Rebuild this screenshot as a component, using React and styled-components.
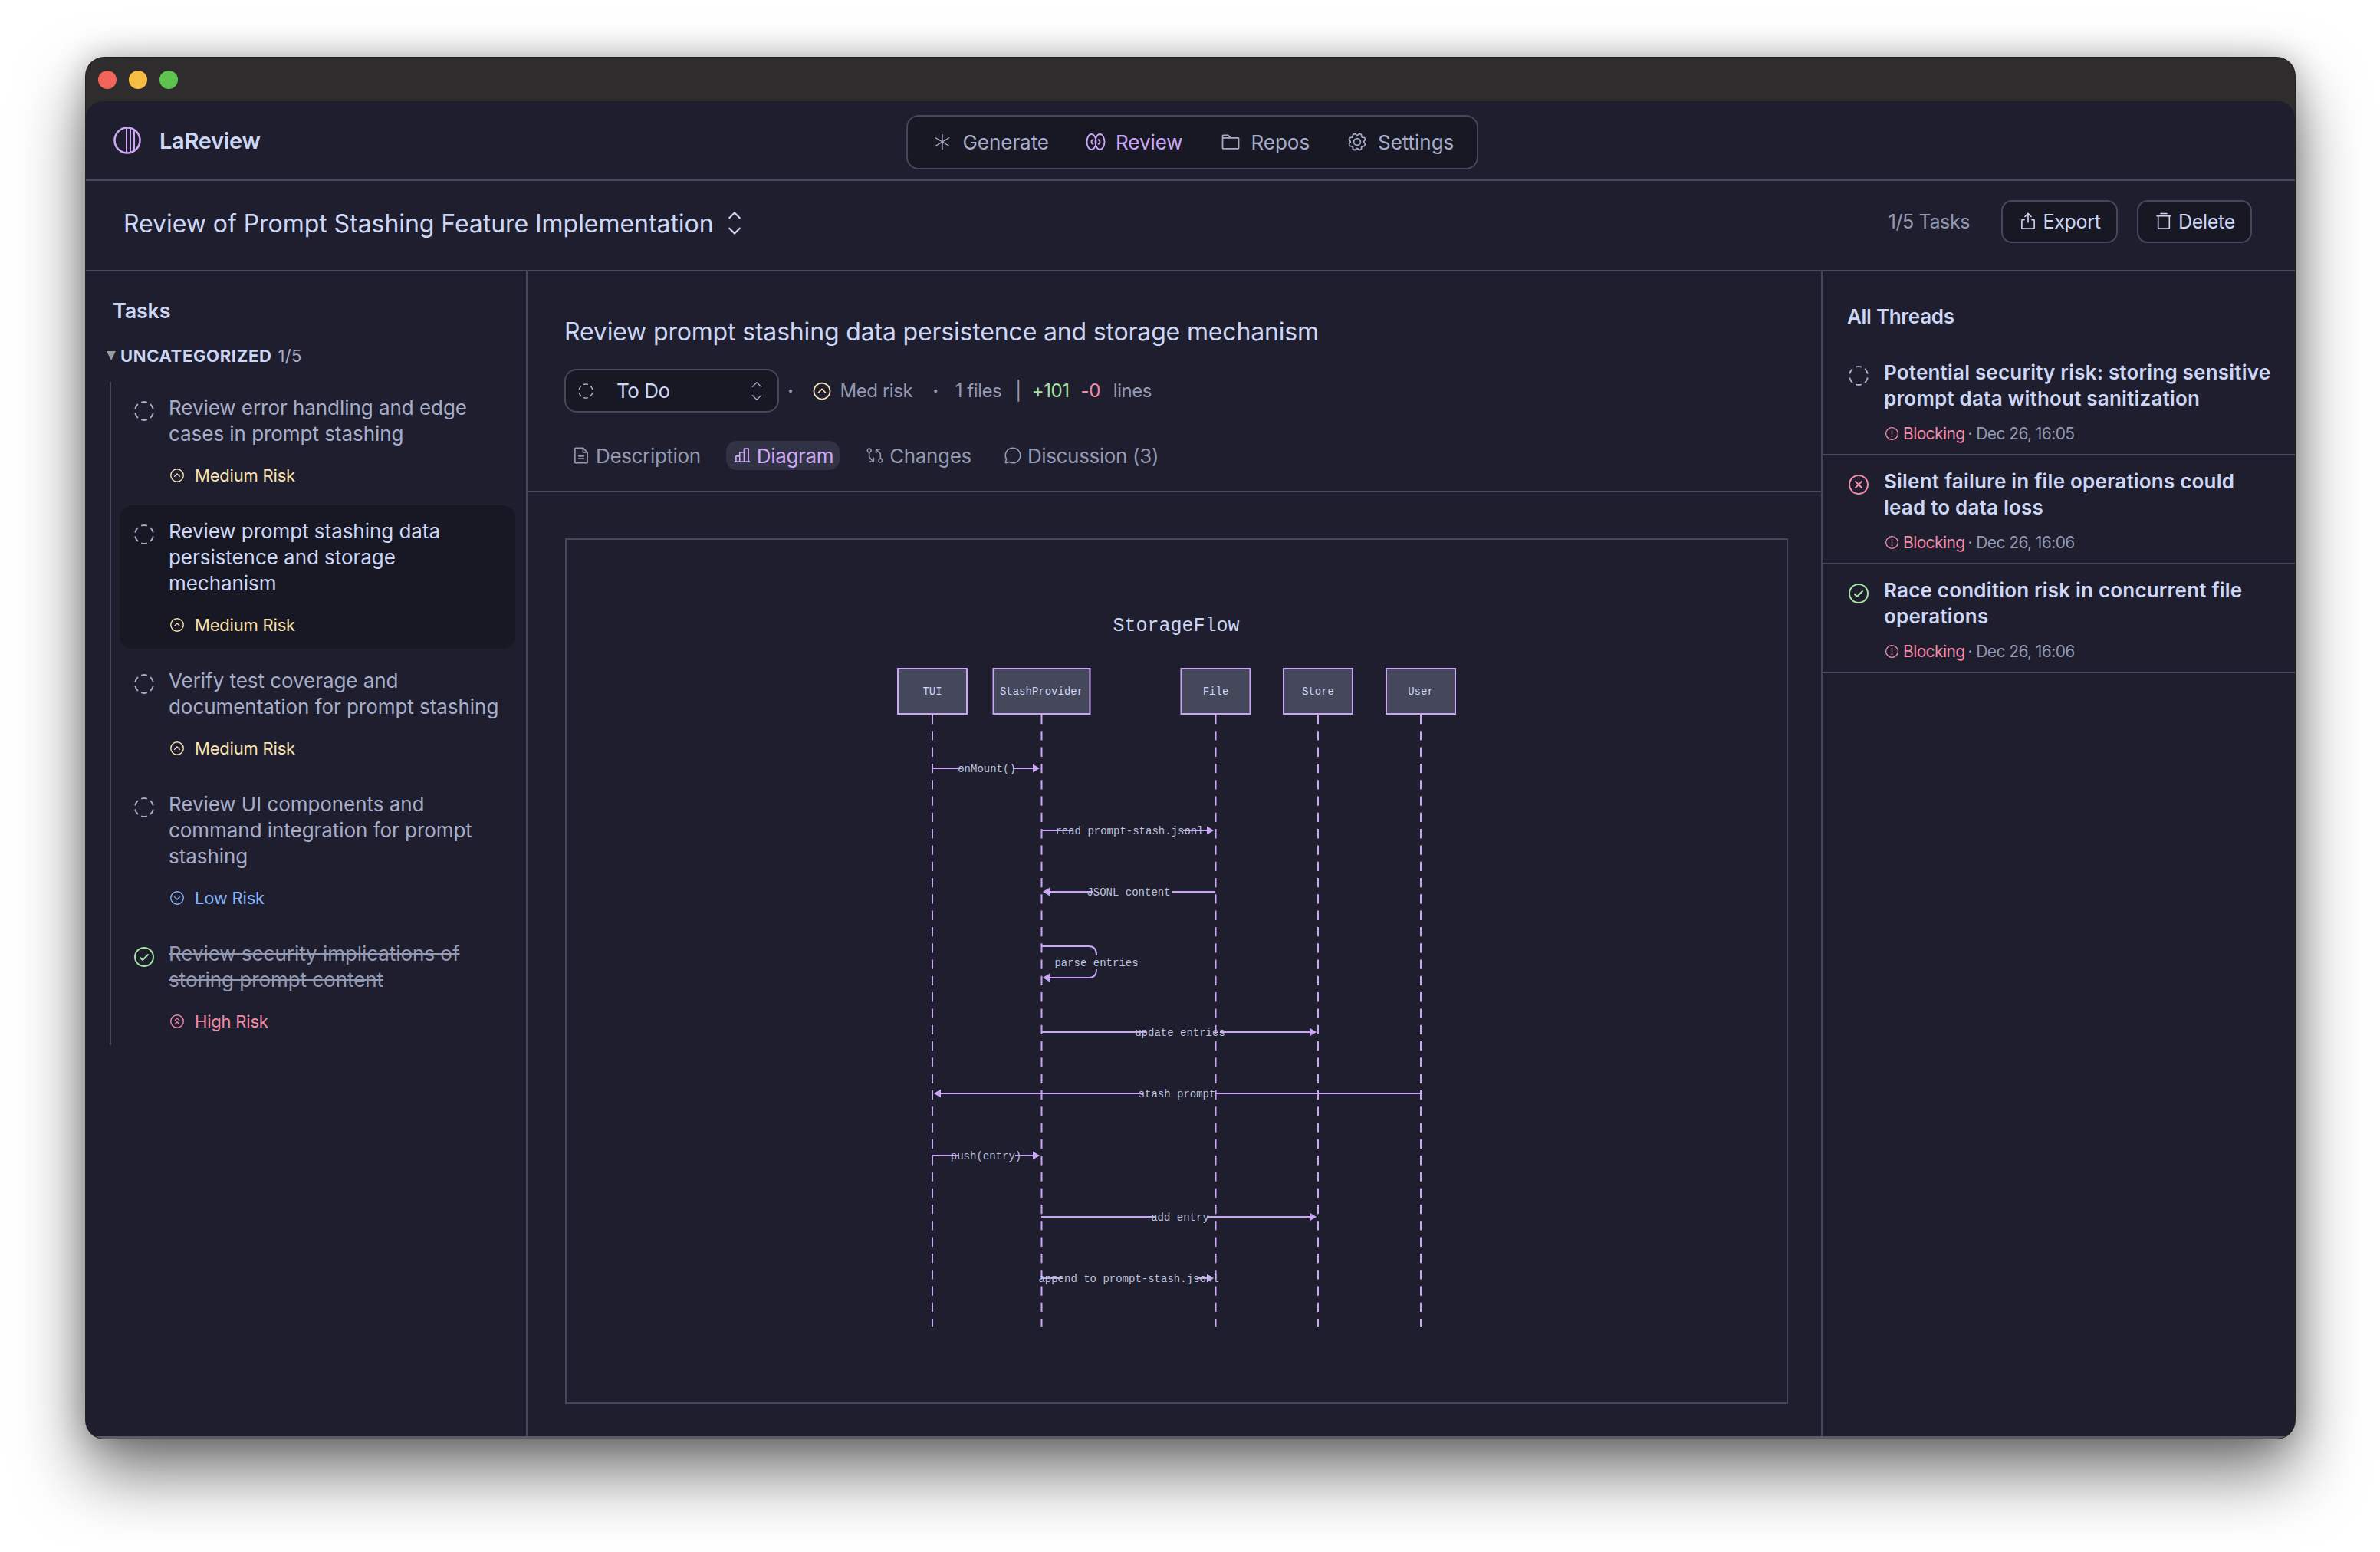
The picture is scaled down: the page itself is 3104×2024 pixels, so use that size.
import React from "react";
import styled, { createGlobalStyle } from "styled-components";
import {
  PiAsteriskLight,
  PiFolder,
  PiGear,
  PiCaretUpDown,
  PiCaretUpDownLight,
  PiExport,
  PiTrashSimple,
  PiCircleDashed,
  PiCheckCircle,
  PiXCircle,
  PiWarningCircle,
  PiCaretCircleUp,
  PiCaretCircleDown,
  PiCaretCircleDoubleUp,
  PiFileText,
  PiChartBar,
  PiGitDiff,
  PiChatCircle,
} from "react-icons/pi";

const base = "#1e1e2e";
const mantle = "#181825";
const line = "#45475a";
const text = "#cdd6f4";
const subtext = "#a6adc8";
const dim = "#9399b2";
const mauve = "#cba6f7";
const green = "#a6e3a1";
const red = "#f38ba8";
const yellow = "#f9e2af";
const blue = "#89b4fa";

const tasks = [
  { title: "Review error handling and edge cases in prompt stashing", risk: "Medium Risk", level: "med" },
  { title: "Review prompt stashing data persistence and storage mechanism", risk: "Medium Risk", level: "med", active: true },
  { title: "Verify test coverage and documentation for prompt stashing", risk: "Medium Risk", level: "med" },
  { title: "Review UI components and command integration for prompt stashing", risk: "Low Risk", level: "low" },
  { title: "Review security implications of storing prompt content", risk: "High Risk", level: "high", done: true },
];

const threads = [
  { title: "Potential security risk: storing sensitive prompt data without sanitization", time: "Dec 26, 16:05", state: "todo" },
  { title: "Silent failure in file operations could lead to data loss", time: "Dec 26, 16:06", state: "wontfix" },
  { title: "Race condition risk in concurrent file operations", time: "Dec 26, 16:06", state: "done" },
];

const riskColors = { med: yellow, low: blue, high: red };
const riskIcons = { med: PiCaretCircleUp, low: PiCaretCircleDown, high: PiCaretCircleDoubleUp };

const actors = [
  { name: "TUI", x: 1216, w: 90 },
  { name: "StashProvider", x: 1358.5, w: 126 },
  { name: "File", x: 1585.5, w: 90 },
  { name: "Store", x: 1719, w: 90 },
  { name: "User", x: 1853, w: 90 },
];

// from, to, y, label, label centre, and the gap the label cuts out of the line
const messages = [
  { from: 1216, to: 1358, y: 1002, label: "onMount()", cx: 1287, gap: [1255, 1321] },
  { from: 1358, to: 1585, y: 1083, label: "read prompt-stash.jsonl", cx: 1473, gap: [1400, 1543] },
  { from: 1585, to: 1358, y: 1163, label: "JSONL content", cx: 1472, gap: [1426, 1528] },
  { from: 1358, to: 1719, y: 1346, label: "update entries", cx: 1539, gap: [1495, 1591] },
  { from: 1853, to: 1216, y: 1426, label: "stash prompt", cx: 1535, gap: [1492, 1584] },
  { from: 1216, to: 1358, y: 1507, label: "push(entry)", cx: 1286, gap: [1250, 1324] },
  { from: 1358, to: 1719, y: 1587, label: "add entry", cx: 1539, gap: [1507, 1574] },
  { from: 1358, to: 1585, y: 1667, label: "append to prompt-stash.jsonl", cx: 1472, gap: [1385, 1561] },
];

// svg origin sits at the inside corner of the diagram frame
const OX = 739;
const OY = 704;

function Arrow({ x, y, dir }) {
  const tip = x - dir * 2;
  const back = tip - dir * 9;
  return <polygon points={`${tip - OX},${y - OY} ${back - OX},${y - 5.5 - OY} ${back - OX},${y + 5.5 - OY}`} fill={mauve} />;
}

function SequenceDiagram() {
  return (
    <svg width="1591" height="1125" viewBox="0 0 1591 1125" style={{ display: "block" }}>
      <SvgTitle x={1534 - OX} y={823 - OY} textAnchor="middle">StorageFlow</SvgTitle>
      {actors.map((a) => (
        <g key={a.name}>
          <line x1={a.x - OX} x2={a.x - OX} y1={932 - OY} y2={1730 - OY} stroke={mauve} strokeWidth="2" strokeDasharray="12.3 9" />
          <rect x={a.x - a.w / 2 - OX} y={872 - OY} width={a.w} height={59} fill={line} stroke={mauve} strokeWidth="2" />
          <SvgLabel x={a.x - OX} y={906 - OY} textAnchor="middle">{a.name}</SvgLabel>
        </g>
      ))}
      {messages.map((m) => {
        const dir = m.to > m.from ? 1 : -1;
        const [g1, g2] = m.gap;
        const nearEnd = dir > 0 ? g1 : g2;
        const farStart = dir > 0 ? g2 : g1;
        return (
          <g key={m.label}>
            <line x1={m.from - OX} x2={nearEnd - OX} y1={m.y - OY} y2={m.y - OY} stroke={mauve} strokeWidth="2" />
            <line x1={farStart - OX} x2={m.to - dir * 4 - OX} y1={m.y - OY} y2={m.y - OY} stroke={mauve} strokeWidth="2" />
            <Arrow x={m.to} y={m.y} dir={dir} />
            <SvgMessage x={m.cx - OX} y={m.y + 5 - OY} textAnchor="middle">{m.label}</SvgMessage>
          </g>
        );
      })}
      <path
        d={`M${1358 - OX} ${1234 - OY} H${1420 - OX} Q${1430 - OX} ${1234 - OY} ${1430 - OX} ${1246 - OY} M${1430 - OX} ${1264 - OY} Q${1430 - OX} ${1275 - OY} ${1420 - OX} ${1275 - OY} H${1362 - OX}`}
        fill="none"
        stroke={mauve}
        strokeWidth="2"
      />
      <Arrow x={1358} y={1275} dir={-1} />
      <SvgMessage x={1430 - OX} y={1260 - OY} textAnchor="middle">parse entries</SvgMessage>
    </svg>
  );
}

function Logo() {
  return (
    <LogoSvg viewBox="0 0 36 36" fill="none" stroke={mauve} strokeWidth="2.6">
      <circle cx="18" cy="18" r="16.5" />
      <path d="M17 2v32M22 2.5v31M27 4.5v27" strokeWidth="2" />
    </LogoSvg>
  );
}

function ReviewIcon() {
  return (
    <NavSvg viewBox="0 0 26 26" fill="none" stroke={mauve} strokeWidth="1.9">
      <ellipse cx="7.5" cy="13" rx="6" ry="10" />
      <ellipse cx="18.5" cy="13" rx="6" ry="10" />
      <path d="M10.2 10.3a2.7 2.7 0 1 0 0 5.4M15.8 10.3a2.7 2.7 0 1 1 0 5.4" />
    </NavSvg>
  );
}

export default function App() {
  return (
    <>
      <GlobalStyle />
      <Window>
        <TitleBar>
          <Light $c="#f0645a" />
          <Light $c="#f6bd42" />
          <Light $c="#5ec44f" />
        </TitleBar>
        <Content>
          <TopNav>
            <Brand>
              <Logo />
              <BrandName>LaReview</BrandName>
            </Brand>
            <NavPill>
              <NavItem><PiAsteriskLight size={28} />Generate</NavItem>
              <NavItem $active><ReviewIcon />Review</NavItem>
              <NavItem><PiFolder size={28} />Repos</NavItem>
              <NavItem><PiGear size={28} />Settings</NavItem>
            </NavPill>
            <span />
          </TopNav>

          <ReviewHeader>
            <ReviewTitle>
              Review of Prompt Stashing Feature Implementation
              <PiCaretUpDown size={36} />
            </ReviewTitle>
            <HeaderActions>
              <TaskCount>1/5 Tasks</TaskCount>
              <ActionButton $w={152}><PiExport size={26} />Export</ActionButton>
              <ActionButton $w={150}><PiTrashSimple size={26} />Delete</ActionButton>
            </HeaderActions>
          </ReviewHeader>

          <Columns>
            <TaskPanel>
              <PanelTitle>Tasks</PanelTitle>
              <GroupHead>
                <Triangle />
                <GroupName>UNCATEGORIZED</GroupName>
                <GroupCount>1/5</GroupCount>
              </GroupHead>
              <TaskList>
                {tasks.map((t) => {
                  const RiskIcon = riskIcons[t.level];
                  return (
                    <TaskItem key={t.title} $active={t.active}>
                      <StatusSlot>
                        {t.done ? <PiCheckCircle size={32} color={green} /> : <PiCircleDashed size={32} color={subtext} />}
                      </StatusSlot>
                      <TaskBody>
                        <TaskTitle $active={t.active} $done={t.done}>{t.title}</TaskTitle>
                        <RiskTag $c={riskColors[t.level]}>
                          <RiskIcon size={22} />
                          {t.risk}
                        </RiskTag>
                      </TaskBody>
                    </TaskItem>
                  );
                })}
              </TaskList>
            </TaskPanel>

            <MainPanel>
              <TaskHeader>
                <MainTitle>Review prompt stashing data persistence and storage mechanism</MainTitle>
                <MetaRow>
                  <StatusSelect>
                    <PiCircleDashed size={24} color={subtext} />
                    <SelectValue>To Do</SelectValue>
                    <PiCaretUpDownLight size={30} color={subtext} />
                  </StatusSelect>
                  <MetaDot $l={11}>·</MetaDot>
                  <MedRisk><PiCaretCircleUp size={28} color={yellow} />Med risk</MedRisk>
                  <MetaDot $l={26}>·</MetaDot>
                  <MetaText $l={22}>1 files</MetaText>
                  <MetaText $l={18}>|</MetaText>
                  <MetaText $l={14} $c={green}>+101</MetaText>
                  <MetaText $l={15} $c={red}>-0</MetaText>
                  <MetaText $l={17}>lines</MetaText>
                </MetaRow>
                <Tabs>
                  <Tab><PiFileText size={26} />Description</Tab>
                  <Tab $active><PiChartBar size={26} />Diagram</Tab>
                  <Tab><PiGitDiff size={26} />Changes</Tab>
                  <Tab><PiChatCircle size={26} />Discussion (3)</Tab>
                </Tabs>
              </TaskHeader>
              <DiagramArea>
                <DiagramFrame>
                  <SequenceDiagram />
                </DiagramFrame>
              </DiagramArea>
            </MainPanel>

            <ThreadPanel>
              <ThreadsTitle>All Threads</ThreadsTitle>
              {threads.map((t) => (
                <ThreadItem key={t.title}>
                  <StatusSlot>
                    {t.state === "todo" && <PiCircleDashed size={32} color={subtext} />}
                    {t.state === "wontfix" && <PiXCircle size={32} color={red} />}
                    {t.state === "done" && <PiCheckCircle size={32} color={green} />}
                  </StatusSlot>
                  <TaskBody>
                    <ThreadTitle>{t.title}</ThreadTitle>
                    <ThreadMeta>
                      <Blocking><PiWarningCircle size={21} />Blocking</Blocking>
                      <span>· {t.time}</span>
                    </ThreadMeta>
                  </TaskBody>
                </ThreadItem>
              ))}
            </ThreadPanel>
          </Columns>
        </Content>
      </Window>
    </>
  );
}

const GlobalStyle = createGlobalStyle`
  html, body {
    margin: 0;
    height: 100%;
    background: #fff;
    overflow: hidden;
  }
  body {
    font-family: Inter, "Noto Sans", sans-serif;
    color: ${text};
  }
  * { box-sizing: border-box; }
`;

const Window = styled.div`
  width: 2881px;
  height: 1801px;
  margin: 75px 0 0 112px;
  display: flex;
  flex-direction: column;
  background: #2e2c2c;
  border-radius: 24px;
  overflow: hidden;
  box-shadow: 0 0 0 1px #222, 0 44px 88px rgba(0, 0, 0, 0.55), 0 0 40px rgba(0, 0, 0, 0.25);
`;

const TitleBar = styled.div`
  height: 57px;
  flex: none;
  display: flex;
  align-items: center;
  gap: 16px;
  padding: 0 16px 0 16px;
`;

const Light = styled.span`
  width: 24px;
  height: 24px;
  border-radius: 50%;
  background: ${(p) => p.$c};
`;

const Content = styled.div`
  flex: 1;
  min-height: 0;
  display: flex;
  flex-direction: column;
  background: ${base};
  border-radius: 22px 22px 0 0;
  border-bottom: 3px solid #5c5b68;
`;

const TopNav = styled.header`
  height: 104px;
  flex: none;
  display: grid;
  grid-template-columns: 1fr auto 1fr;
  align-items: center;
  padding: 0 36px;
  border-bottom: 2px solid ${line};
`;

const Brand = styled.div`
  display: flex;
  align-items: center;
  gap: 24px;
`;

const LogoSvg = styled.svg`
  width: 36px;
  height: 36px;
`;

const BrandName = styled.span`
  font-size: 29px;
  font-weight: 600;
  letter-spacing: -0.3px;
  color: ${text};
`;

const NavPill = styled.nav`
  width: 746px;
  height: 71px;
  margin: 4px 0 0 4px;
  display: flex;
  align-items: center;
  gap: 48px;
  padding: 0 0 0 31px;
  background: ${mantle};
  border: 2px solid ${line};
  border-radius: 16px;
`;

const NavItem = styled.div`
  display: flex;
  align-items: center;
  gap: 13px;
  font-size: 26px;
  letter-spacing: -0.05px;
  color: ${(p) => (p.$active ? mauve : subtext)};
`;

const NavSvg = styled.svg`
  width: 26px;
  height: 26px;
`;

const ReviewHeader = styled.div`
  height: 118px;
  flex: none;
  display: flex;
  align-items: center;
  justify-content: space-between;
  padding: 0 56px 8px 49px;
  border-bottom: 2px solid ${line};
`;

const ReviewTitle = styled.h1`
  margin: 2px 0 0;
  display: flex;
  align-items: center;
  gap: 9px;
  font-size: 32px;
  font-weight: 400;
  letter-spacing: -0.05px;
  color: ${text};
`;

const HeaderActions = styled.div`
  display: flex;
  align-items: center;
  gap: 25px;
  margin-top: -2px;
`;

const TaskCount = styled.span`
  margin-right: 16px;
  font-size: 25px;
  letter-spacing: -0.4px;
  color: ${dim};
`;

const ActionButton = styled.button`
  width: ${(p) => p.$w}px;
  height: 56px;
  display: flex;
  align-items: center;
  justify-content: center;
  gap: 6px;
  padding: 0;
  font: inherit;
  font-size: 25px;
  letter-spacing: -0.3px;
  color: ${text};
  background: ${mantle};
  border: 2px solid ${line};
  border-radius: 14px;
`;

const Columns = styled.div`
  flex: 1;
  min-height: 0;
  display: grid;
  grid-template-columns: 576px 1689px 1fr;
`;

const TaskPanel = styled.aside`
  padding: 35px 14px 0 27px;
  border-right: 2px solid ${line};
`;

const PanelTitle = styled.h2`
  margin: 0 0 0 8px;
  font-size: 27px;
  line-height: 34px;
  font-weight: 600;
  letter-spacing: -0.2px;
  color: ${text};
`;

const GroupHead = styled.div`
  height: 34px;
  margin-top: 24px;
  display: flex;
  align-items: center;
  font-size: 22px;
`;

const Triangle = styled.span`
  width: 0;
  height: 0;
  margin-right: 6px;
  border-left: 6px solid transparent;
  border-right: 6px solid transparent;
  border-top: 12px solid #9a9a9a;
`;

const GroupName = styled.span`
  font-weight: 700;
  letter-spacing: 0.65px;
  color: ${text};
`;

const GroupCount = styled.span`
  margin-left: 8px;
  letter-spacing: 0.3px;
  color: ${subtext};
`;

const TaskList = styled.div`
  margin: 17px 0 0 4px;
  padding-left: 11px;
  border-left: 2px solid ${line};
  display: flex;
  flex-direction: column;
  gap: 8px;
`;

const TaskItem = styled.div`
  display: flex;
  gap: 16px;
  padding: 17px 14px 16px 16px;
  border-radius: 16px;
  background: ${(p) => (p.$active ? mantle : "transparent")};
`;

const StatusSlot = styled.div`
  flex: none;
  width: 32px;
  height: 42px;
  display: flex;
  align-items: center;
  justify-content: center;
`;

const TaskBody = styled.div`
  min-width: 0;
`;

const TaskTitle = styled.div`
  font-size: 26px;
  line-height: 34px;
  letter-spacing: -0.05px;
  color: ${(p) => (p.$active ? text : p.$done ? dim : subtext)};
  text-decoration: ${(p) => (p.$done ? "line-through" : "none")};
`;

const RiskTag = styled.div`
  height: 30px;
  margin-top: 22px;
  display: flex;
  align-items: center;
  gap: 12px;
  font-size: 22px;
  letter-spacing: -0.2px;
  color: ${(p) => p.$c};
`;

const MainPanel = styled.main`
  display: flex;
  flex-direction: column;
  border-right: 2px solid ${line};
`;

const TaskHeader = styled.div`
  height: 288px;
  flex: none;
  padding: 57px 48px 0;
  border-bottom: 2px solid ${line};
`;

const MainTitle = styled.h2`
  margin: 0;
  font-size: 32px;
  line-height: 44px;
  font-weight: 400;
  letter-spacing: -0.17px;
  color: ${text};
`;

const MetaRow = styled.div`
  height: 57px;
  margin-top: 26px;
  display: flex;
  align-items: center;
  font-size: 24px;
  letter-spacing: -0.45px;
  color: ${dim};
`;

const StatusSelect = styled.div`
  width: 280px;
  height: 57px;
  flex: none;
  display: flex;
  align-items: center;
  padding: 0 12px 0 14px;
  background: ${mantle};
  border: 2px solid ${line};
  border-radius: 16px;
`;

const SelectValue = styled.span`
  flex: 1;
  margin-left: 28px;
  font-size: 26px;
  color: ${text};
`;

const MetaDot = styled.span`
  margin-left: ${(p) => p.$l}px;
  font-weight: 700;
`;

const MedRisk = styled.span`
  margin-left: 23px;
  display: flex;
  align-items: center;
  gap: 10px;
`;

const MetaText = styled.span`
  margin-left: ${(p) => p.$l}px;
  color: ${(p) => p.$c || dim};
`;

const Tabs = styled.div`
  margin: 37px 0 0 1px;
  display: flex;
  align-items: center;
  gap: 25px;
`;

const Tab = styled.div`
  height: 38px;
  display: flex;
  align-items: center;
  gap: 6px;
  padding: 0 8px;
  font-size: 26px;
  letter-spacing: -0.35px;
  border-radius: 14px;
  color: ${(p) => (p.$active ? mauve : dim)};
  background: ${(p) => (p.$active ? "#313244" : "transparent")};
`;

const DiagramArea = styled.div`
  flex: 1;
  min-height: 0;
  padding: 60px 44px 0 49px;
`;

const DiagramFrame = styled.div`
  width: 1595px;
  height: 1129px;
  border: 2px solid ${line};
`;

const SvgTitle = styled.text`
  font-family: "Liberation Mono", monospace;
  font-size: 25px;
  fill: ${text};
`;

const SvgLabel = styled.text`
  font-family: "Liberation Mono", monospace;
  font-size: 14px;
  fill: ${text};
`;

const SvgMessage = styled.text`
  font-family: "Liberation Mono", monospace;
  font-size: 14px;
  fill: #bcc2dc;
`;

const ThreadPanel = styled.aside`
  display: flex;
  flex-direction: column;
`;

const ThreadsTitle = styled.h2`
  height: 98px;
  margin: 0;
  padding: 42px 0 0 32px;
  font-size: 26px;
  line-height: 34px;
  font-weight: 600;
  letter-spacing: -0.3px;
  color: ${text};
`;

const ThreadItem = styled.div`
  height: 142px;
  display: flex;
  gap: 17px;
  padding: 17px 24px 0 31px;
  border-bottom: 2px solid ${line};
`;

const ThreadTitle = styled.div`
  font-size: 26px;
  line-height: 34px;
  font-weight: 600;
  letter-spacing: 0.2px;
  color: ${text};
`;

const ThreadMeta = styled.div`
  margin-top: 14px;
  height: 28px;
  display: flex;
  align-items: center;
  gap: 4px;
  font-size: 21px;
  letter-spacing: -0.6px;
  color: ${dim};
`;

const Blocking = styled.span`
  display: flex;
  align-items: center;
  gap: 4px;
  color: ${red};
`;
